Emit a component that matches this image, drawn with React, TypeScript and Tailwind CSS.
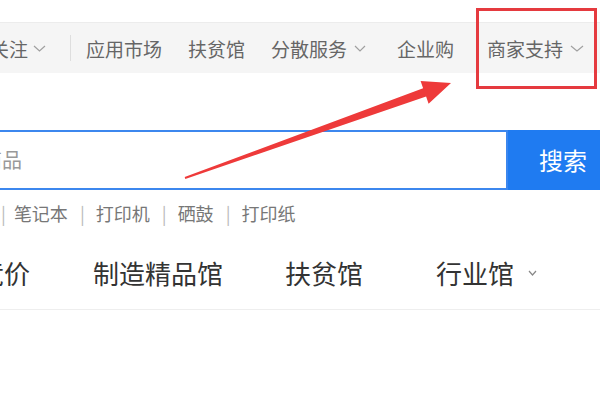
import React from "react"

function Chevron({ w = 12, h = 7, color = "#a0a0a0" }: { w?: number; h?: number; color?: string }) {
  return (
    <svg width={w} height={h} viewBox={`0 0 ${w} ${h}`} fill="none">
      <path d={`M1 1 L${w / 2} ${h - 1} L${w - 1} 1`} stroke={color} strokeWidth="1.2" />
    </svg>
  )
}

const font = { fontFamily: '"Noto Sans CJK SC", "Noto Sans", sans-serif' }

export default function App() {
  return (
    <div className="relative h-[400px] w-[600px] overflow-hidden bg-white" style={font}>
      <div className="h-[22px]" />

      {/* top shortcut bar */}
      <div className="flex h-[51px] items-center border-t border-[#ececec] bg-[#f5f5f5] text-[19px] leading-none text-[#666] whitespace-nowrap">
        <span className="ml-[-10px]">关注</span>
        <span className="ml-[5px]"><Chevron w={13} /></span>
        <span className="ml-[24px] h-[26px] w-px bg-[#dedede]" />
        <span className="ml-[15px]">应用市场</span>
        <span className="ml-[26px]">扶贫馆</span>
        <span className="ml-[26px]">分散服务</span>
        <span className="ml-[7px]"><Chevron /></span>
        <span className="ml-[31px]">企业购</span>
        <span className="ml-[33px]">商家支持</span>
        <span className="ml-[7px]"><Chevron w={14} /></span>
      </div>

      <div className="h-[57px]" />

      {/* search */}
      <div className="flex h-[60px]">
        <div className="ml-[-4px] flex flex-1 items-center border-2 border-[#3c87ee] bg-white">
          <span className="ml-[-16px] text-[20px] text-[#999]">商品</span>
        </div>
        <button className="flex w-[92px] items-center justify-center bg-[#1f7bf1] pl-[18px] text-[24px] text-white">
          搜索
        </button>
      </div>

      {/* hot words */}
      <div className="flex h-[46px] items-center text-[18px] leading-none text-[#777] whitespace-nowrap">
        <span className="ml-[1px] text-[#bbb]">|</span>
        <span className="ml-[8px]">笔记本</span>
        <span className="ml-[12px] text-[#bbb]">|</span>
        <span className="ml-[11px]">打印机</span>
        <span className="ml-[12px] text-[#bbb]">|</span>
        <span className="ml-[11px]">硒鼓</span>
        <span className="ml-[12px] text-[#bbb]">|</span>
        <span className="ml-[11px]">打印纸</span>
      </div>

      {/* category nav */}
      <div className="flex h-[74px] items-center border-b border-[#eeeeee] text-[26px] leading-none text-[#333] whitespace-nowrap">
        <span className="ml-[-22px]">竞价</span>
        <span className="ml-[63px]">制造精品馆</span>
        <span className="ml-[62px]">扶贫馆</span>
        <span className="ml-[73px]">行业馆</span>
        <span className="ml-[14px]"><Chevron w={9} h={6} color="#888" /></span>
      </div>

      {/* annotation: red box */}
      <div className="absolute left-[476px] top-[8px] h-[81px] w-[121px] border-[3px] border-[#e53a3f]" />

      {/* annotation: arrow */}
      <svg className="pointer-events-none absolute left-0 top-0" width="600" height="400">
        <polygon
          points="184.7,177.1 423.1,88.3 420.6,81.1 451,83 428.6,103.7 426.1,96.5 185.3,178.9"
          fill="#ee3a3a"
        />
      </svg>
    </div>
  )
}
